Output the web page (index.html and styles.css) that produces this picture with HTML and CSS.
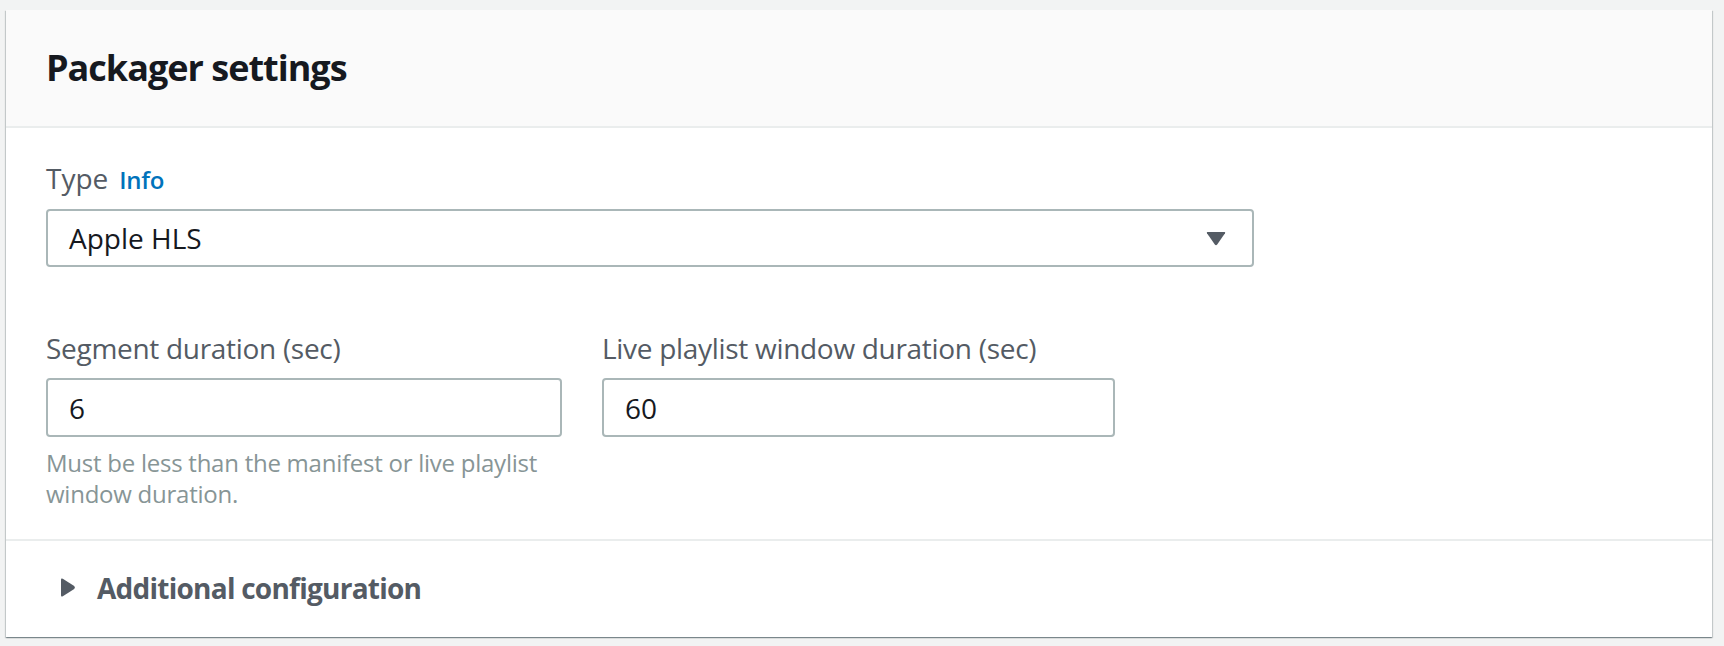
FILE: index.html
```html
<!DOCTYPE html>
<html lang="en">
<head>
<meta charset="utf-8">
<title>Packager settings</title>
<link rel="stylesheet" href="styles.css">
</head>
<body>
<section class="card">
  <header class="card-header">
    <h2 class="title">Packager settings</h2>
  </header>
  <div class="card-body">
    <div class="field">
      <div class="label-row">
        <span class="label">Type</span>
        <a class="info" href="#">Info</a>
      </div>
      <div class="select">
        <span class="select-value">Apple HLS</span>
        <svg class="caret" width="20" height="15" viewBox="0 0 20 15"><path d="M1.5 1 H18.5 Q19.6 1 19 2.2 L11.2 13.6 Q10 15 8.8 13.6 L1 2.2 Q0.4 1 1.5 1 Z" fill="#545b64"/></svg>
      </div>
    </div>
    <div class="row">
      <div class="field col">
        <div class="label label-tight">Segment duration (sec)</div>
        <div class="input">6</div>
        <div class="help">Must be less than the manifest or live playlist window duration.</div>
      </div>
      <div class="field col">
        <div class="label label-tight">Live playlist window duration (sec)</div>
        <div class="input">60</div>
      </div>
    </div>
  </div>
  <div class="card-footer">
    <svg class="expand" width="16" height="21" viewBox="0 0 16 21"><path d="M1 2.8 Q1 0.7 2.8 1.8 L14.2 9.1 Q15.7 10.5 14.2 11.9 L2.8 19.2 Q1 20.3 1 18.2 Z" fill="#545b64"/></svg>
    <span class="expand-label">Additional configuration</span>
  </div>
</section>
</body>
</html>
```
FILE: styles.css
```css
html, body {
  margin: 0;
  padding: 0;
  background: #f2f3f3;
  font-family: "Open Sans", "Noto Sans", sans-serif;
}

body {
  padding: 10px 12px 8px 6px;
}

.card {
  background: #ffffff;
  box-shadow: 0 1px 1px 0 rgba(0, 28, 36, 0.3), 1px 1px 1px 0 rgba(0, 28, 36, 0.15), -1px 1px 1px 0 rgba(0, 28, 36, 0.15);
}

.card-header {
  background: #fafafa;
  border-bottom: 2px solid #eaeded;
  display: flex;
  align-items: center;
  padding: 0 40px;
  box-sizing: border-box;
  height: 118px;
}

.title {
  margin: 0;
  font-size: 36px;
  font-weight: 700;
  color: #16191f;
  line-height: 44px;
  letter-spacing: -1px;
}

.card-body {
  padding: 30px 40px 30px 40px;
  border-bottom: 2px solid #eaeded;
}

.field {
  display: flex;
  flex-direction: column;
}

.label-row {
  display: flex;
  align-items: baseline;
  gap: 11px;
}

.label {
  font-size: 28px;
  line-height: 40px;
  color: #545b64;
}

.label-tight {
  letter-spacing: -0.3px;
}

.info {
  font-size: 24px;
  font-weight: 600;
  color: #0073bb;
  text-decoration: none;
  letter-spacing: -0.3px;
}

.select {
  margin-top: 11px;
  width: 1208px;
  height: 58px;
  box-sizing: border-box;
  border: 2px solid #aab7b8;
  border-radius: 4px;
  display: flex;
  align-items: center;
  justify-content: space-between;
  padding: 0 26px 0 21px;
  font-size: 28px;
  color: #16191f;
}

.row {
  display: flex;
  gap: 40px;
  margin-top: 61px;
}

.col {
  width: 516px;
}

.col + .col {
  width: 513px;
}

.input {
  margin-top: 10px;
  height: 59px;
  box-sizing: border-box;
  border: 2px solid #aab7b8;
  border-radius: 4px;
  display: flex;
  align-items: center;
  padding: 0 21px;
  font-size: 28px;
  color: #16191f;
}

.help {
  margin-top: 10px;
  font-size: 24px;
  line-height: 31px;
  color: #879596;
  letter-spacing: -0.25px;
  width: 510px;
}

.card-footer {
  height: 96px;
  box-sizing: border-box;
  padding: 0 54px 3px 54px;
  display: flex;
  align-items: center;
  gap: 21px;
}

.expand-label {
  font-size: 28px;
  font-weight: 700;
  color: #545b64;
  letter-spacing: -0.75px;
}
```
